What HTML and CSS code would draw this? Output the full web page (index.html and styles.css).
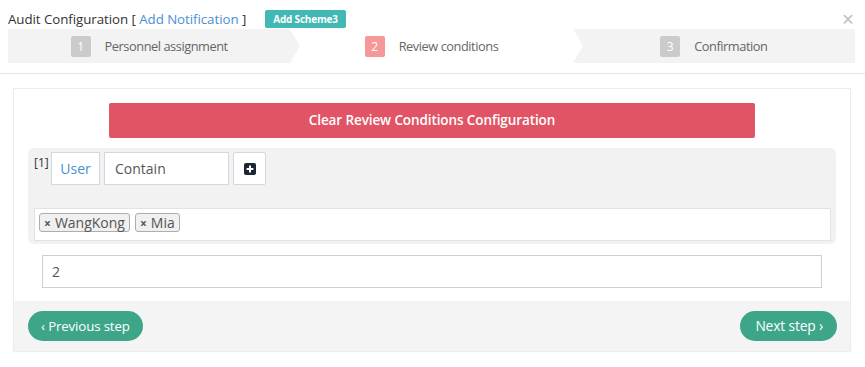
FILE: index.html
```html
<!DOCTYPE html>
<html>
<head>
<meta charset="utf-8">
<link rel="stylesheet" href="styles.css">
</head>
<body>
<div class="modal">
  <div class="header">
    <div class="title-row">
      <span class="title">Audit Configuration [ <span class="link">Add Notification</span> ]</span>
      <span class="badge">Add Scheme3</span>
      <span class="close">×</span>
    </div>
    <div class="steps">
      <div class="step done"><span class="num">1</span><span class="label">Personnel assignment</span></div>
      <div class="step active"><span class="num">2</span><span class="label">Review conditions</span></div>
      <div class="step todo"><span class="num">3</span><span class="label">Confirmation</span></div>
    </div>
  </div>
  <div class="body">
    <div class="box">
      <div class="box-body">
        <div class="btn-clear">Clear Review Conditions Configuration</div>
        <div class="cond">
          <div class="cond-row">
            <span class="idx">[1]</span>
            <div class="field user">User</div>
            <div class="field contain">Contain</div>
            <div class="field plus">
              <svg width="12" height="12" viewBox="0 0 12 12"><rect x="0" y="0" width="12" height="12" rx="2" fill="#1c2533"/><path d="M6 2.6v6.8M2.6 6h6.8" stroke="#fff" stroke-width="2"/></svg>
            </div>
          </div>
          <div class="tags">
            <span class="tag"><span class="x">×</span>WangKong</span>
            <span class="tag"><span class="x">×</span>Mia</span>
          </div>
        </div>
        <div class="num-input">2</div>
      </div>
      <div class="box-footer">
        <div class="btn-step prev">‹ Previous step</div>
        <div class="btn-step next">Next step ›</div>
      </div>
    </div>
  </div>
</div>
</body>
</html>
```
FILE: styles.css
```css
* { box-sizing: border-box; }
html, body { margin: 0; padding: 0; background: #fff; }
body { font-family: "Open Sans", "Noto Sans", sans-serif; color: #333; }

.header {
  padding: 0 10px 10px 8px;
  border-bottom: 1px solid #e6e6e6;
}
.title-row {
  display: flex;
  align-items: center;
  height: 29px;
  padding-top: 8px;
}
.title { font-size: 13.3px; color: #333; line-height: 20px; letter-spacing: -0.05px; }
.link { color: #4a8fd4; }
.badge {
  margin-left: 19px;
  background: #41b8b3;
  color: #fff;
  font-size: 10px;
  font-weight: 700;
  height: 18px;
  line-height: 18px;
  padding: 0 8px;
  border-radius: 2px;
  letter-spacing: -0.2px;
}
.close {
  margin-left: auto;
  margin-right: 1px;
  color: #bdbdbd;
  font-size: 21px;
  line-height: 20px;
}

.steps { display: flex; height: 34px; }
.step {
  flex: 1;
  position: relative;
  display: flex;
  align-items: center;
  justify-content: center;
  gap: 14px;
  font-size: 12.8px;
  letter-spacing: -0.45px;
  color: #666;
}
.step.done, .step.todo { background: #f3f3f3; }
.step.done::after {
  content: "";
  position: absolute;
  right: -10px;
  top: 0;
  border-left: 10px solid #f3f3f3;
  border-top: 17px solid transparent;
  border-bottom: 17px solid transparent;
  z-index: 1;
}
.step.todo::before {
  content: "";
  position: absolute;
  left: 0;
  top: 0;
  border-left: 10px solid #fff;
  border-top: 17px solid transparent;
  border-bottom: 17px solid transparent;
}
.num {
  width: 20px;
  height: 21px;
  line-height: 21px;
  text-align: center;
  color: #fff;
  font-size: 12px;
  letter-spacing: 0;
  background: #cbcbcb;
  border-radius: 2px;
}
.active .num { background: #f4989a; }

.body { padding: 14px 14px 0 13px; }
.box { border: 1px solid #ececec; }
.box-body { padding: 14px 14px 13px 14px; }
.btn-clear {
  width: 80%;
  margin: 0 auto;
  height: 35px;
  line-height: 35px;
  background: #e15465;
  color: #fff;
  text-align: center;
  font-size: 13.5px;
  font-weight: 600;
  letter-spacing: -0.1px;
  border-radius: 2px;
}
.cond {
  margin-top: 10px;
  background: #f2f2f2;
  border-radius: 5px;
  padding: 4px 5px 3px 6px;
}
.cond-row { display: flex; gap: 4px; }
.idx { font-size: 12px; color: #333; margin-top: 2px; width: 13px; }
.field {
  height: 33px;
  border: 1px solid #d2d8e2;
  background: #fff;
  font-size: 14px;
  display: flex;
  align-items: center;
}
.user { width: 49px; justify-content: center; color: #4a8fd4; }
.contain { width: 125px; padding-left: 10px; color: #555; }
.plus { width: 33px; justify-content: center; border-radius: 2px; }
.tags {
  margin-top: 23px;
  height: 33px;
  background: #fff;
  border: 1px solid #e2e2e2;
  padding: 4px;
  display: flex;
  gap: 5px;
}
.tag {
  height: 19px;
  line-height: 17px;
  border: 1px solid #adadad;
  background: #f0f0f0;
  border-radius: 3px;
  padding: 0 4px;
  font-size: 14px;
  color: #555;
}
.x { font-size: 12px; font-weight: 700; color: #555; margin-right: 4px; }
.num-input {
  margin: 11px 14px 0 14px;
  height: 33px;
  border: 1px solid #c9d0dc;
  padding-left: 9px;
  line-height: 31px;
  font-size: 14px;
  color: #555;
}
.box-footer {
  background: #f4f4f4;
  height: 50px;
  padding: 0 13px 0 14px;
  display: flex;
  align-items: center;
  justify-content: space-between;
}
.btn-step {
  height: 30px;
  line-height: 30px;
  border-radius: 15px;
  background: #3da689;
  color: #fff;
  font-size: 13.3px;
  letter-spacing: -0.15px;
}
.prev { padding: 0 13px; }
.next { padding: 0 14px 0 15px; font-size: 13.8px; }
```
